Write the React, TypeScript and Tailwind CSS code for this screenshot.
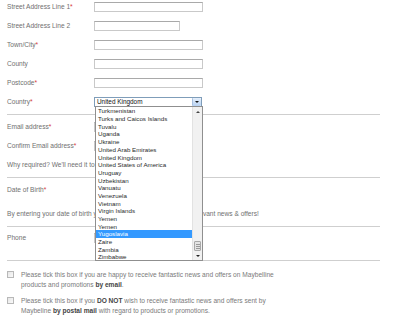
import React from 'react';

const countries = [
  'Turkmenistan',
  'Turks and Caicos Islands',
  'Tuvalu',
  'Uganda',
  'Ukraine',
  'United Arab Emirates',
  'United Kingdom',
  'United States of America',
  'Uruguay',
  'Uzbekistan',
  'Vanuatu',
  'Venezuela',
  'Vietnam',
  'Virgin Islands',
  'Yemen',
  'Yemen',
  'Yugoslavia',
  'Zaire',
  'Zambia',
  'Zimbabwe',
];

const Req = () => <span className="text-[#d83a3a]">*</span>;

const Rule = ({ className = '' }: { className?: string }) => (
  <div className={`ml-[7px] w-[373px] h-px bg-[#cfcfcf] ${className}`} />
);

const TextInput = ({ className }: { className: string }) => (
  <div className={`h-[10.5px] border border-[#c9c9c9] border-t-[#a9a9a9] bg-white ${className}`} />
);

const Field = ({ label, required, inputClass }: { label: string; required?: boolean; inputClass: string }) => (
  <div className="flex items-center h-[10.5px]">
    <label className="w-[87px] whitespace-nowrap">
      {label}
      {required && <Req />}
    </label>
    <TextInput className={inputClass} />
  </div>
);

const CountryList = () => (
  <div className="absolute z-10 left-0 top-full w-[108px] h-[155px] border border-[#8f8f8f] bg-white flex font-['Liberation_Sans',Arial,sans-serif] text-[6.2px] text-[#2a2a2a]">
    <ul className="flex-1 overflow-hidden">
      {countries.map((c, i) => (
        <li
          key={i}
          className={`h-[7.7px] leading-[7.7px] pl-[2px] whitespace-nowrap ${
            c === 'Yugoslavia' ? 'bg-[#3399ff] text-white' : ''
          }`}
        >
          {c}
        </li>
      ))}
    </ul>
    {/* scrollbar */}
    <div className="w-[10px] bg-[#f1f1f1] border-l border-[#e2e2e2] flex flex-col">
      <div className="h-[9px] flex items-center justify-center">
        <div className="w-0 h-0 border-l-[2px] border-r-[2px] border-b-[2px] border-l-transparent border-r-transparent border-b-[#444]" />
      </div>
      <div className="flex-1 flex flex-col justify-end">
        <div className="mx-[1px] h-[10px] bg-[#e4e4e4] border border-[#a8a8a8] rounded-[1px] flex flex-col items-center justify-center gap-[1px]">
          <div className="w-[4px] h-px bg-[#999]" />
          <div className="w-[4px] h-px bg-[#999]" />
          <div className="w-[4px] h-px bg-[#999]" />
        </div>
      </div>
      <div className="h-[9px] flex items-center justify-center">
        <div className="w-0 h-0 border-l-[2px] border-r-[2px] border-t-[2px] border-l-transparent border-r-transparent border-t-[#222]" />
      </div>
    </div>
  </div>
);

const CountrySelect = () => (
  <div className="relative w-[108px] h-[10.5px] border border-[#7f9db9] bg-white flex items-center">
    <span className="flex-1 pl-[2px] text-[6.4px] text-[#111] whitespace-nowrap">United Kingdom</span>
    <div className="w-[9px] h-full bg-gradient-to-b from-[#e6f0fc] to-[#b8d2f2] border-l border-[#a7c0e0] rounded-[1px] flex items-center justify-center">
      <div className="w-0 h-0 border-l-[2px] border-r-[2px] border-t-[2.5px] border-l-transparent border-r-transparent border-t-[#111]" />
    </div>
    <CountryList />
  </div>
);

const Checkbox = () => (
  <div className="mt-[1px] w-[7px] h-[7px] shrink-0 border border-[#b8b8b8] bg-gradient-to-br from-[#e6e6e6] to-[#fafafa]" />
);

export default function App() {
  return (
    <div className="w-[400px] h-[326px] overflow-hidden bg-white font-['Liberation_Sans',Arial,sans-serif] text-[6.6px] text-[#707070]">
      {/* address */}
      <div className="pt-[1.7px] pl-[7px] flex flex-col gap-[8.56px]">
        <Field label="Street Address Line 1" required inputClass="w-[109px]" />
        <Field label="Street Address Line 2" inputClass="w-[86px]" />
        <Field label="Town/City" required inputClass="w-[109px]" />
        <Field label="County" inputClass="w-[109px]" />
        <Field label="Postcode" required inputClass="w-[109px]" />
        <div className="flex items-center h-[10.5px]">
          <label className="w-[87px]">
            Country
            <Req />
          </label>
          <CountrySelect />
        </div>
      </div>

      <Rule className="mt-[6.5px]" />

      {/* email */}
      <div className="pt-[2.4px] pl-[7px]">
        <div className="flex items-center h-[19.2px]">
          <label className="w-[87px]">
            Email address
            <Req />
          </label>
          <TextInput className="w-[106px]" />
        </div>
        <div className="flex items-center h-[19.2px]">
          <label className="w-[87px] whitespace-nowrap">
            Confirm Email address
            <Req />
          </label>
          <TextInput className="w-[106px]" />
        </div>
        <div className="flex items-center h-[19.2px] whitespace-nowrap">
          Why required? We'll need it to send you our newsletter.
        </div>
      </div>

      <Rule className="mt-[2px]" />

      {/* date of birth */}
      <div className="pl-[7px]">
        <div className="flex items-center h-[24px]">
          <label className="w-[87px]">
            Date of Birth
            <Req />
          </label>
        </div>
        <div className="mt-[2px] flex items-center h-[20px] whitespace-nowrap">
          By entering your date of birth you'll receive a birthday treat and relevant news &amp; offers!
        </div>
      </div>

      <Rule className="mt-[2px]" />

      {/* phone */}
      <div className="pl-[7px]">
        <div className="mt-[1px] flex items-center h-[20px]">
          <label className="w-[87px]">Phone</label>
          <TextInput className="w-[106px]" />
        </div>
      </div>

      <Rule className="mt-[12px]" />

      {/* opt-ins */}
      <div className="pt-[9.25px] pl-[7px] flex flex-col gap-[7px] text-[6.6px] leading-[9.5px] text-[#7a7a7a]">
        <div className="flex gap-[7px]">
          <Checkbox />
          <p className="w-[264px]">
            Please tick this box if you are happy to receive fantastic news and offers on Maybelline products and
            promotions <b className="text-[#444]">by email</b>.
          </p>
        </div>
        <div className="flex gap-[7px]">
          <Checkbox />
          <p className="w-[264px]">
            Please tick this box if you <b className="text-[#444]">DO NOT</b> wish to receive fantastic news and
            offers sent by Maybeline <b className="text-[#444]">by postal mail</b> with regard to products or
            promotions.
          </p>
        </div>
      </div>
    </div>
  );
}
